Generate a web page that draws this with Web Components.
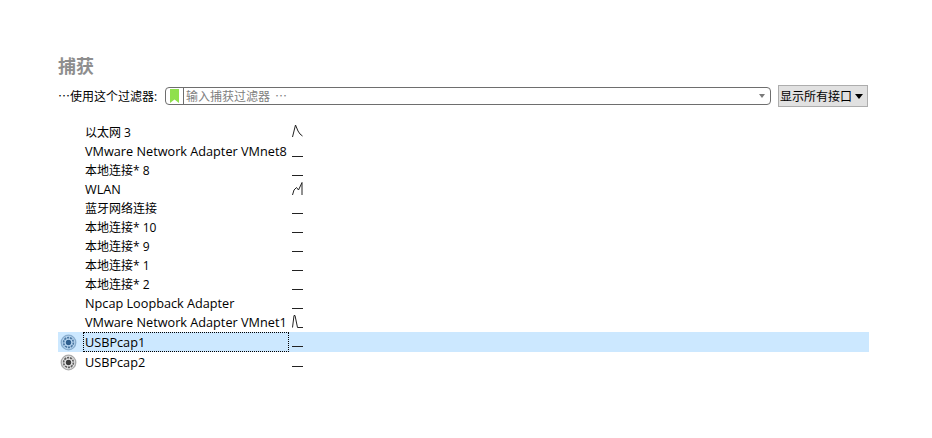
<!DOCTYPE html>
<html lang="zh">
<head>
<meta charset="utf-8">
<title>捕获</title>
<style>
  html, body { margin: 0; padding: 0; background: #fff; }
  body { font-family: "Open Sans", "Noto Sans CJK SC", sans-serif; font-size: 12px; color: #000; }
</style>
</head>
<body>
<capture-page></capture-page>

<script>
class FilterBar extends HTMLElement {
  constructor() {
    super();
    this._shadowRoot = this.attachShadow({ mode: "open" });
    this._shadowRoot.innerHTML = `
    <style>
    :host { display: flex; align-items: center; height: 22px; margin-right: 1px; }
    .label { width: 107px; white-space: nowrap; font-size: 12px; }
    .input {
      flex: 1; height: 16px; margin-right: 7px;
      display: flex; align-items: center;
      border: 1px solid #6e6e6e; border-radius: 4px;
    }
    .mark { width: 17px; height: 16px; border-right: 1px solid #6e6e6e; display: flex; justify-content: center; align-items: center; flex: none; margin-right: 2px; }
    .hint { flex: 1; color: #808080; font-size: 12px; white-space: nowrap; word-spacing: 2px; }
    .arrow { width: 0; height: 0; border: 3px solid transparent; border-top: 4px solid #7a7a7a; border-bottom: 0; margin-right: 5px; }
    .btn {
      width: 90px; height: 22px; box-sizing: border-box; padding-left: 1px;
      background: #e1e1e1; border: 1px solid #adadad;
      display: flex; align-items: center; gap: 3px;
      font-size: 12px; white-space: nowrap;
    }
    .down { width: 0; height: 0; border: 4px solid transparent; border-top: 5px solid #000; border-bottom: 0; }
    </style>
    <span class="label">⋯使用这个过滤器:</span>
    <div class="input">
      <span class="mark"><svg width="9" height="14" viewBox="0 0 9 14"><path d="M0 0H9V14L4.5 10.5L0 14Z" fill="#8fe04c"/></svg></span>
      <span class="hint">输入捕获过滤器 ⋯</span>
      <span class="arrow"></span>
    </div>
    <div class="btn">显示所有接口<span class="down"></span></div>
    `;
  }
}

class IfaceRow extends HTMLElement {
  constructor() {
    super();
    this._shadowRoot = this.attachShadow({ mode: "open" });
  }
  connectedCallback() {
    const spark = this.getAttribute("spark") || "M0 13.5H11";
    const usb = this.hasAttribute("usb");
    const color = this.hasAttribute("selected") ? "#2f5f8f" : "#3c3c3c";
    this._shadowRoot.innerHTML = `
    <style>
    :host { display: flex; align-items: flex-start; height: 19px; }
    :host([usb]) { height: 20px; }
    :host([selected]) { background: #cce8ff; }
    .icon { width: 25px; height: 100%; flex: none; display: flex; align-items: center; padding-left: 2px; box-sizing: border-box; }
    .icon svg { overflow: visible; }
    .name { width: 206px; flex: none; box-sizing: border-box; height: 100%; padding-left: 2px; line-height: 20px; white-space: nowrap; font-size: 12px; }
    :host([latin]) .name { font-size: 12.7px; line-height: 18px; }
    :host([usb]) .name { line-height: 20px; }
    :host([selected]) .name { outline: 1px dotted #000; outline-offset: -1px; }
    svg.spark { margin: 1px 0 0 3px; display: block; flex: none; }
    </style>
    <span class="icon">${usb ? `<svg width="16" height="16" viewBox="0 0 16 16">
      <circle cx="8.5" cy="8.5" r="7.3" fill="${color}" fill-opacity=".12" stroke="${color}" stroke-opacity=".4" stroke-width="1.3"/>
      <circle cx="8.5" cy="8.5" r="4.9" fill="none" stroke="${color}" stroke-opacity=".8" stroke-width="1.7" stroke-dasharray="2.2 .8"/>
      <circle cx="8.5" cy="8.5" r="2.7" fill="${color}"/></svg>` : ""}</span>
    <span class="name"><slot></slot></span>
    <svg class="spark" width="12" height="19" viewBox="0 0 12 19"><path d="${spark}" fill="none" stroke="#222" stroke-width="1"/></svg>
    `;
  }
}

class CapturePage extends HTMLElement {
  constructor() {
    super();
    this._shadowRoot = this.attachShadow({ mode: "open" });
    const flat = "M0 13.5H11";
    const rows = [
      ["以太网 3", "M0.5 13L3.5 1L6 7L8 10L10.5 12", 0],
      ["VMware Network Adapter VMnet8", flat, 1],
      ["本地连接* 8", flat, 0],
      ["WLAN", "M0.5 14L2 9L4.5 6.5L6.5 9L10 1.5V14", 1],
      ["蓝牙网络连接", flat, 0],
      ["本地连接* 10", flat, 0],
      ["本地连接* 9", flat, 0],
      ["本地连接* 1", flat, 0],
      ["本地连接* 2", flat, 0],
      ["Npcap Loopback Adapter", flat, 1],
      ["VMware Network Adapter VMnet1", "M0.5 13.5L2 1.5H3L5.5 13.5H11", 1],
    ];
    this._shadowRoot.innerHTML = `
    <style>
    :host { display: block; height: 438px; box-sizing: border-box; padding: 53px 63px 0 58px; }
    h1 { margin: 0 0 4px; font: bold 18px/28px "Liberation Serif", "Noto Sans CJK SC", serif; color: #8e8e8e; }
    .list { margin-top: 16px; }
    </style>
    <h1>捕获</h1>
    <filter-bar></filter-bar>
    <div class="list">
      ${rows.map(r => `<iface-row ${r[2] ? "latin" : ""} spark="${r[1]}">${r[0]}</iface-row>`).join("")}
      <iface-row latin usb selected spark="${flat}">USBPcap1</iface-row>
      <iface-row latin usb spark="${flat}">USBPcap2</iface-row>
    </div>
    `;
  }
}

customElements.define("filter-bar", FilterBar);
customElements.define("iface-row", IfaceRow);
customElements.define("capture-page", CapturePage);
</script>
</body>
</html>
